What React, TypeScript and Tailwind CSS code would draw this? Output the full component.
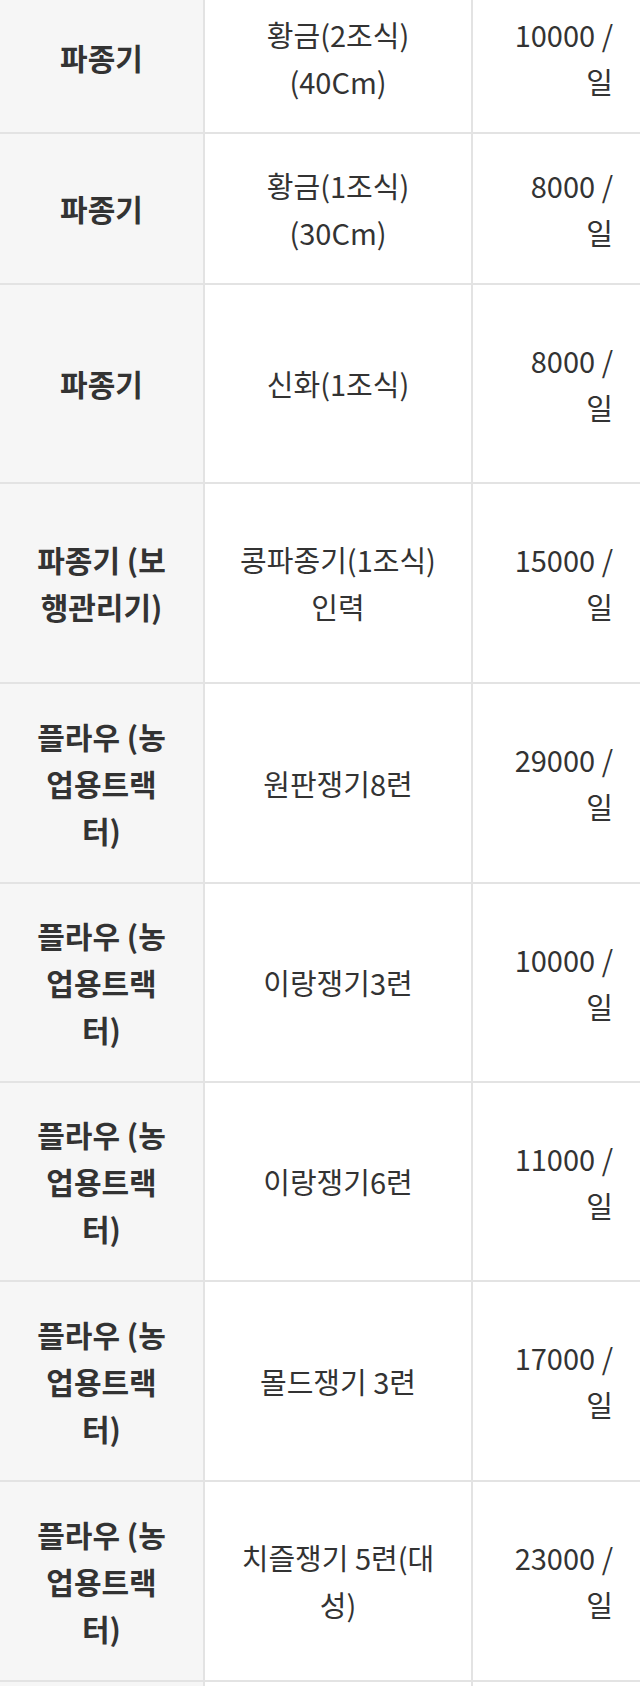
import React from "react";

type Row = { h: number; a: string[]; b: string[]; c: string[] };

const rows: Row[] = [
  { h: 151, a: ["파종기"], b: ["황금(2조식)", "(40Cm)"], c: ["10000 /", "일"] },
  { h: 151, a: ["파종기"], b: ["황금(1조식)", "(30Cm)"], c: ["8000 /", "일"] },
  { h: 199, a: ["파종기"], b: ["신화(1조식)"], c: ["8000 /", "일"] },
  { h: 200, a: ["파종기 (보", "행관리기)"], b: ["콩파종기(1조식)", "인력"], c: ["15000 /", "일"] },
  { h: 200, a: ["플라우 (농", "업용트랙", "터)"], b: ["원판쟁기8련"], c: ["29000 /", "일"] },
  { h: 199, a: ["플라우 (농", "업용트랙", "터)"], b: ["이랑쟁기3련"], c: ["10000 /", "일"] },
  { h: 199, a: ["플라우 (농", "업용트랙", "터)"], b: ["이랑쟁기6련"], c: ["11000 /", "일"] },
  { h: 200, a: ["플라우 (농", "업용트랙", "터)"], b: ["몰드쟁기 3련"], c: ["17000 /", "일"] },
  { h: 200, a: ["플라우 (농", "업용트랙", "터)"], b: ["치즐쟁기 5련(대", "성)"], c: ["23000 /", "일"] },
  { h: 151, a: [], b: [], c: [] },
];

function Lines({ lines }: { lines: string[] }) {
  return (
    <>
      {lines.map((l, i) => (
        <div key={i} className="whitespace-pre">
          {l}
        </div>
      ))}
    </>
  );
}

export default function App() {
  return (
    <div
      className="w-[640px] h-[1686px] overflow-hidden bg-white text-[#333333] text-[29px] leading-[47px]"
      style={{ fontFamily: '"Noto Sans CJK KR", "Noto Sans", sans-serif' }}
    >
      <div className="-mt-[17px] flex flex-col">
        {rows.map((r, i) => (
          <div
            key={i}
            className="flex border-b-2 border-[#e3e3e3] shrink-0"
            style={{ height: r.h }}
          >
            <div className="w-[205px] shrink-0 bg-[#f6f6f6] border-r-2 border-[#e3e3e3] flex flex-col items-center justify-center font-bold text-[30px] text-center">
              <Lines lines={r.a} />
            </div>
            <div className="w-[268px] shrink-0 border-r-2 border-[#e3e3e3] flex flex-col items-center justify-center text-center">
              <Lines lines={r.b} />
            </div>
            <div className="flex-1 flex flex-col items-end justify-center pr-[27px] text-right">
              <Lines lines={r.c} />
            </div>
          </div>
        ))}
      </div>
    </div>
  );
}
